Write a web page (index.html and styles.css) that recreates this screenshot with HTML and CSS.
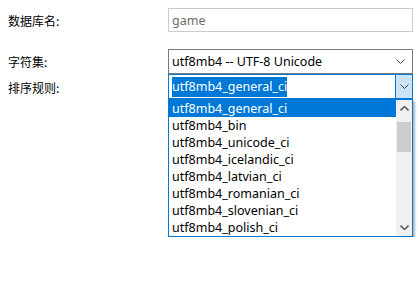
FILE: index.html
```html
<!DOCTYPE html>
<html lang="zh">
  <head>
    <meta charset="utf-8" />
    <title>数据库</title>
    <link rel="stylesheet" href="styles.css">
  </head>
  <body>
    <form class="form">
      <div class="row">
        <label class="label">数据库名:</label>
        <div class="field input disabled">game</div>
      </div>
      <div class="row row-gap">
        <label class="label">字符集:</label>
        <div class="field select">
          <span class="value">utf8mb4 -- UTF-8 Unicode</span>
          <svg class="chev" width="9" height="5" viewBox="0 0 9 5"><polyline points="0.5,0.5 4.5,4.5 8.5,0.5" fill="none" stroke="#444" stroke-width="1"/></svg>
        </div>
      </div>
      <div class="row row-top">
        <label class="label">排序规则:</label>
        <div class="combo-wrap">
          <div class="field combo">
            <span class="value"><span class="sel">utf8mb4_general_ci</span></span>
            <div class="combo-btn">
              <svg width="9" height="5" viewBox="0 0 9 5"><polyline points="0.5,0.5 4.5,4.5 8.5,0.5" fill="none" stroke="#444" stroke-width="1"/></svg>
            </div>
          </div>
          <div class="list">
            <ul class="items">
              <li class="active">utf8mb4_general_ci</li>
              <li>utf8mb4_bin</li>
              <li>utf8mb4_unicode_ci</li>
              <li>utf8mb4_icelandic_ci</li>
              <li>utf8mb4_latvian_ci</li>
              <li>utf8mb4_romanian_ci</li>
              <li>utf8mb4_slovenian_ci</li>
              <li>utf8mb4_polish_ci</li>
            </ul>
            <div class="scroll">
              <div class="arrow"><svg width="9" height="5" viewBox="0 0 9 5"><polyline points="0.5,4.5 4.5,0.5 8.5,4.5" fill="none" stroke="#606060" stroke-width="1.6"/></svg></div>
              <div class="track"><div class="thumb"></div></div>
              <div class="arrow"><svg width="9" height="5" viewBox="0 0 9 5"><polyline points="0.5,0.5 4.5,4.5 8.5,0.5" fill="none" stroke="#606060" stroke-width="1.6"/></svg></div>
            </div>
          </div>
        </div>
      </div>
    </form>
  </body>
</html>
```

FILE: styles.css
```css
body {
  margin: 0;
  background: #fff;
  font-family: "Noto Sans", "Noto Sans CJK SC", sans-serif;
  font-size: 12.5px;
  color: #000;
}

.form {
  padding: 8px 0 0 8px;
}

.row {
  display: flex;
  align-items: flex-start;
}
.row-gap {
  margin-top: 16px;
}

.label {
  width: 160px;
  font-family: "Noto Sans CJK SC", sans-serif;
  font-size: 12px;
  line-height: 25px;
}
.row-top .label {
  line-height: 27px;
}

.field {
  box-sizing: border-box;
  width: 245px;
  height: 25px;
  border: 1px solid #7a7a7a;
  display: flex;
  align-items: center;
  padding-left: 3px;
  white-space: nowrap;
}

.input {
  height: 24px;
}
.disabled {
  border-color: #cccccc;
  color: #6d6d6d;
}

.select .value {
  flex: 1;
}
.chev {
  margin-right: 7px;
}

.combo-wrap {
  width: 245px;
}
.combo {
  border-color: #0078d7;
  padding-right: 0;
}
.combo .value {
  flex: 1;
}
.sel {
  background: #0078d7;
  color: #fff;
  padding: 1px 0 2px;
}
.combo-btn {
  width: 16px;
  height: 23px;
  background: #cce4f7;
  border-left: 1px solid #0078d7;
  display: flex;
  align-items: center;
  justify-content: center;
}

.list {
  box-sizing: border-box;
  height: 138px;
  border: 1px solid #0078d7;
  display: flex;
  background: #fff;
  box-shadow: 2px 2px 2px rgba(0, 0, 0, 0.3);
}

.items {
  flex: 1;
  list-style: none;
  margin: 0;
  padding: 0;
}
.items li {
  height: 17px;
  line-height: 17px;
  padding-left: 3px;
}
.items .active {
  background: #0078d7;
  color: #fff;
}

.scroll {
  width: 16px;
  background: #f0f0f0;
  display: flex;
  flex-direction: column;
}
.arrow {
  height: 17px;
  display: flex;
  align-items: center;
  justify-content: center;
}
.track {
  flex: 1;
}
.thumb {
  height: 30px;
  margin: 5px 1px 0;
  background: #cdcdcd;
}
```
